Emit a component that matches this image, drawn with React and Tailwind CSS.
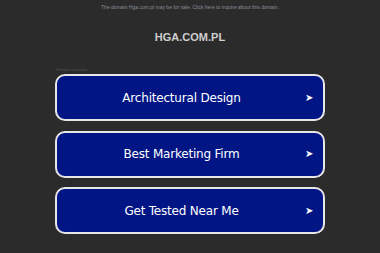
import React from 'react';

const items = ['Architectural Design', 'Best Marketing Firm', 'Get Tested Near Me'];

const App = () => {
    return (
        <div className="bg-[#2b2b2b] w-[380px] h-[253px] overflow-hidden flex flex-col items-center" style={{ fontFamily: '"Liberation Sans", Arial, sans-serif' }}>
            <p className="mt-[4px] text-[5px] leading-[6px] text-[#8a8f99]">
                The domain Hga.com.pl may be for sale. Click here to inquire about this domain.
            </p>
            <h1 className="mt-[21px] text-[11px] leading-[12px] font-bold text-[#cfcfcf]">HGA.COM.PL</h1>
            <div className="mt-[24px] w-[270px] flex flex-col">
                <div className="text-[4px] leading-[5px] text-[#555] pl-[1px]">Related searches</div>
                <div className="mt-[2px] flex flex-col gap-[9.5px]">
                    {items.map((item) => (
                        <div key={item} className="h-[47px] rounded-[10px] border-2 border-[#e6e6e6] bg-[#011585] flex items-center justify-center pr-[17px] relative">
                            <span className="text-white text-[12px] tracking-[-0.2px]" style={{ fontFamily: '"DejaVu Sans", sans-serif' }}>{item}</span>
                            <span className="absolute right-[10px] top-1/2 -translate-y-1/2 text-white text-[10px] leading-none">➤</span>
                        </div>
                    ))}
                </div>
            </div>
        </div>
    );
};

export default App;
